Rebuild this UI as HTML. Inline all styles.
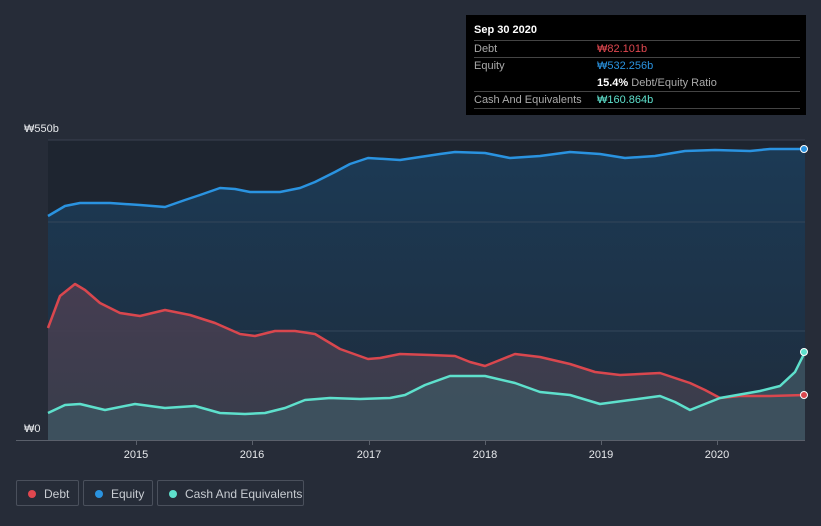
<!DOCTYPE html>
<html><head><meta charset="utf-8"><style>
body{margin:0;width:821px;height:526px;background:#262c38;font-family:"Liberation Sans",sans-serif;overflow:hidden;position:relative}
.tip{position:absolute;left:466px;top:15px;width:340px;height:100px;background:#000;color:#fff;font-size:11px}
.tip .r{position:absolute;left:8px;right:6px;border-top:1px solid #444;height:17px}
.tip .l{position:absolute;left:0;top:2px;color:#aaa}
.tip .v{position:absolute;left:123px;top:2px}
.leg{position:absolute;top:480px;height:26px;border:1px solid #4a505c;border-radius:2px;color:#c8ccd2;font-size:12px;line-height:26px;box-sizing:border-box}
.leg i{position:absolute;left:11px;top:9px;width:8px;height:8px;border-radius:50%}
.leg span{position:absolute;left:27px}
</style></head><body>
<svg width="821" height="526" style="position:absolute;left:0;top:0">
<defs><linearGradient id="g" x1="0" y1="0" x2="0" y2="1"><stop offset="0" stop-color="#1c3a55"/><stop offset="1" stop-color="#1e2c3c"/></linearGradient>
<linearGradient id="d" x1="0" y1="0" x2="0" y2="1"><stop offset="0" stop-color="#4a3e52"/><stop offset="1" stop-color="#3a3f4c"/></linearGradient></defs>
<rect x="48" y="140" width="757" height="300" fill="#1e2530"/>
<polygon fill="url(#g)" points="48,216 65,206 80,203 110,203 140,205 165,207 185,200 200,195 220,188 235,189 250,192 280,192 300,188 315,182 335,172 350,164 368,158 385,159 400,160 420,157 440,154 455,152 485,153 510,158 540,156 570,152 600,154 625,158 655,156 685,151 715,150 750,151 770,149 805,149 805,440 48,440"/>
<line x1="48" y1="140" x2="805" y2="140" stroke="#3a4150"/>
<line x1="48" y1="222" x2="805" y2="222" stroke="#34465a" />
<line x1="48" y1="331" x2="805" y2="331" stroke="#34465a"/>
<polygon fill="url(#d)" opacity="0.9" points="48,328 60,296 75,284 85,290 100,303 120,313 140,316 165,310 190,315 215,323 240,334 255,336 275,331 295,331 315,334 340,349 368,359 380,358 400,354 430,355 455,356 470,362 485,366 500,360 515,354 540,357 570,364 595,372 620,375 660,373 690,383 705,390 720,398 740,396 770,396 805,395 805,440 48,440"/>
<polygon fill="#3f5562" opacity="0.8" points="48,413 65,405 80,404 105,410 135,404 165,408 195,406 220,413 245,414 265,413 285,408 305,400 330,398 360,399 390,398 405,395 425,385 450,376 485,376 515,383 540,392 570,395 600,404 630,400 660,396 675,402 690,410 710,402 720,398 760,391 780,386 795,372 805,352 805,440 48,440"/>
<g fill="none" stroke-width="2.5" stroke-linejoin="round">
<polyline stroke="#2a93e0" points="48,216 65,206 80,203 110,203 140,205 165,207 185,200 200,195 220,188 235,189 250,192 280,192 300,188 315,182 335,172 350,164 368,158 385,159 400,160 420,157 440,154 455,152 485,153 510,158 540,156 570,152 600,154 625,158 655,156 685,151 715,150 750,151 770,149 805,149"/>
<polyline stroke="#d9474e" points="48,328 60,296 75,284 85,290 100,303 120,313 140,316 165,310 190,315 215,323 240,334 255,336 275,331 295,331 315,334 340,349 368,359 380,358 400,354 430,355 455,356 470,362 485,366 500,360 515,354 540,357 570,364 595,372 620,375 660,373 690,383 705,390 720,398 740,396 770,396 805,395"/>
<polyline stroke="#5ee0cc" points="48,413 65,405 80,404 105,410 135,404 165,408 195,406 220,413 245,414 265,413 285,408 305,400 330,398 360,399 390,398 405,395 425,385 450,376 485,376 515,383 540,392 570,395 600,404 630,400 660,396 675,402 690,410 710,402 720,398 760,391 780,386 795,372 805,352"/>
</g>
<circle cx="804" cy="149" r="3.5" fill="#2a93e0" stroke="#fff" stroke-width="1"/>
<circle cx="804" cy="395" r="3.5" fill="#d9474e" stroke="#fff" stroke-width="1"/>
<circle cx="804" cy="352" r="3.5" fill="#5ee0cc" stroke="#fff" stroke-width="1"/>
<line x1="16" y1="440.5" x2="805" y2="440.5" stroke="#5a606b"/>
<g stroke="#5a606b"><line x1="136.5" y1="440" x2="136.5" y2="445"/><line x1="252.5" y1="440" x2="252.5" y2="445"/><line x1="369.5" y1="440" x2="369.5" y2="445"/><line x1="485.5" y1="440" x2="485.5" y2="445"/><line x1="601.5" y1="440" x2="601.5" y2="445"/><line x1="717.5" y1="440" x2="717.5" y2="445"/></g>
<g fill="#e6e8eb" font-size="11" text-anchor="middle" font-family="Liberation Sans"><text x="136" y="458">2015</text><text x="252" y="458">2016</text><text x="369" y="458">2017</text><text x="485" y="458">2018</text><text x="601" y="458">2019</text><text x="717" y="458">2020</text></g>
<text x="24" y="132" fill="#e6e8eb" font-size="11">₩550b</text>
<text x="24" y="432" fill="#e6e8eb" font-size="11">₩0</text>
</svg>
<div class="tip">
<div style="position:absolute;left:8px;top:9px;font-weight:bold">Sep 30 2020</div>
<div class="r" style="top:25px"><span class="l">Debt</span><span class="v" style="color:#e0474f">₩82.101b</span></div>
<div class="r" style="top:42px;height:34px"><span class="l">Equity</span><span class="v" style="color:#2a93e0">₩532.256b</span><span class="v" style="top:19px"><b>15.4%</b> <span style="color:#aaa">Debt/Equity Ratio</span></span></div>
<div class="r" style="top:76px"><span class="l">Cash And Equivalents</span><span class="v" style="color:#5ee0cc">₩160.864b</span></div>
<div class="r" style="top:93px"></div>
</div>
<div class="leg" style="left:16px;width:63px"><i style="background:#e0474f"></i><span>Debt</span></div>
<div class="leg" style="left:83px;width:70px"><i style="background:#2a93e0"></i><span>Equity</span></div>
<div class="leg" style="left:157px;width:147px"><i style="background:#5ee0cc"></i><span>Cash And Equivalents</span></div>
</body></html>
